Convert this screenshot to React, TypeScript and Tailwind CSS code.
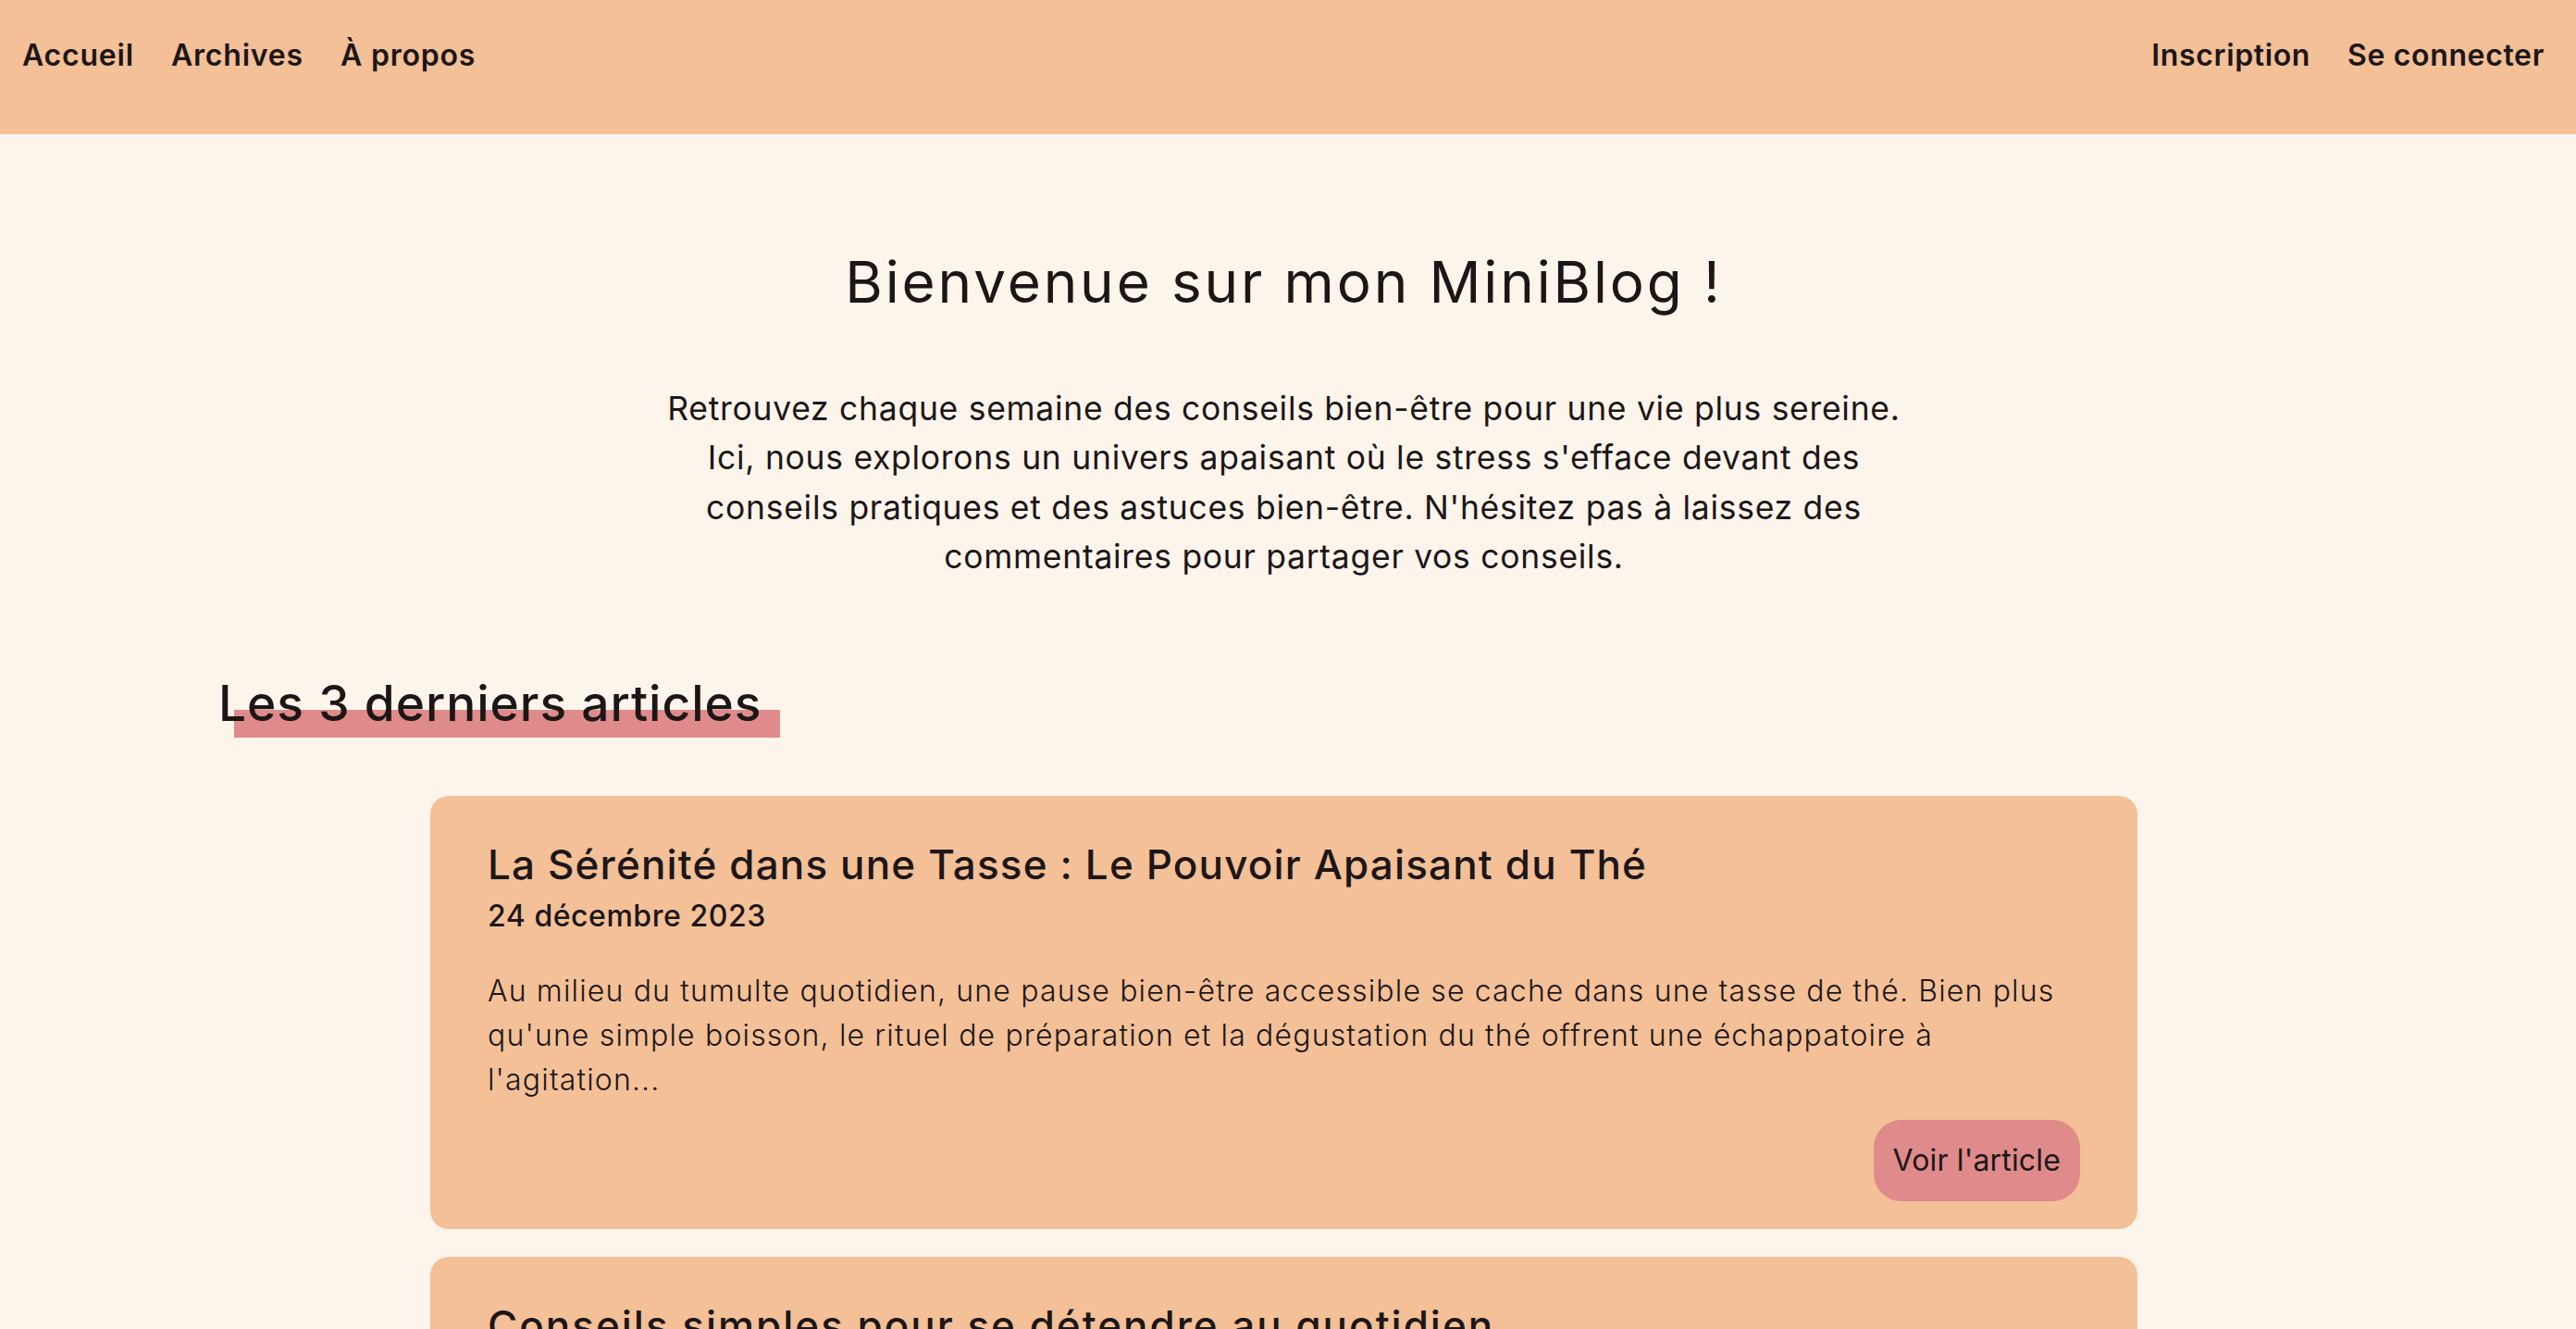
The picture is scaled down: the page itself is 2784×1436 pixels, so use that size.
import React from "react";

const articles = [
  {
    title: "La Sérénité dans une Tasse : Le Pouvoir Apaisant du Thé",
    date: "24 décembre 2023",
    lines: [
      "Au milieu du tumulte quotidien, une pause bien-être accessible se cache dans une tasse de thé. Bien plus",
      "qu'une simple boisson, le rituel de préparation et la dégustation du thé offrent une échappatoire à",
      "l'agitation...",
    ],
  },
  {
    title: "Conseils simples pour se détendre au quotidien",
    date: "17 décembre 2023",
    lines: [
      "Dans un monde où le rythme effréné de la vie quotidienne peut souvent nous submerger, il est",
      "essentiel de prendre des moments pour se détendre...",
    ],
  },
];

export default function App() {
  return (
    <div
      className="min-h-screen bg-[#fdf5ec] text-[#1d1617]"
      style={{ fontFamily: "Inter, 'Noto Sans', sans-serif" }}
    >
      <nav className="flex h-[145px] items-start justify-between bg-[#f3c097] pl-[24px] pr-[34px] pt-[36px]">
        <div className="flex gap-[40px] text-[32px] font-semibold leading-[48px] tracking-[0.025em]">
          <a>Accueil</a>
          <a>Archives</a>
          <a>À propos</a>
        </div>
        <div className="flex gap-[40px] text-[32px] font-semibold leading-[48px] tracking-[0.02em]">
          <a>Inscription</a>
          <a>Se connecter</a>
        </div>
      </nav>

      <main className="flex w-[2775px] flex-col">
        <h1 className="mt-[124px] text-center text-[62px] font-normal leading-[72px] tracking-[0.046em]">
          Bienvenue sur mon MiniBlog !
        </h1>
        <p className="mt-[74px] text-center text-[35.5px] font-normal leading-[53.3px] tracking-[0.02em]">
          Retrouvez chaque semaine des conseils bien-être pour une vie plus sereine.
          <br />
          Ici, nous explorons un univers apaisant où le stress s'efface devant des
          <br />
          conseils pratiques et des astuces bien-être. N'hésitez pas à laissez des
          <br />
          commentaires pour partager vos conseils.
        </p>

        <div className="ml-[236px] mt-[100px] self-start">
          <h2 className="relative inline-block text-[53.3px] font-medium leading-[64px] tracking-[0.018em]">
            <span className="absolute bottom-[-5px] left-[17px] right-[-20px] h-[30px] bg-[#df8a8b]" />
            <span className="relative">Les 3 derniers articles</span>
          </h2>
        </div>

        <div className="mx-auto mt-[68px] flex w-[1845px] flex-col gap-[30px]">
          {articles.map((a, idx) => (
            <article
              key={a.title}
              className="flex flex-col rounded-[20px] bg-[#f3c097] px-[62px] pb-[30px] pt-[48px]"
            >
              <h3
                className={
                  idx === 0
                    ? "text-[44px] font-medium leading-[53px] tracking-[0.026em]"
                    : "text-[44px] font-medium leading-[53px] tracking-[0.045em]"
                }
              >
                {a.title}
              </h3>
              <div className="mt-[5px] text-[32px] font-medium leading-[48px] tracking-[0.017em]">{a.date}</div>
              <p className="mt-[33px] text-[32px] font-light leading-[48px] tracking-[0.036em]">
                {a.lines.map((l, i) => (
                  <React.Fragment key={i}>
                    {l}
                    {i < a.lines.length - 1 && <br />}
                  </React.Fragment>
                ))}
              </p>
              <div className="mt-[19px] flex justify-end">
                <a className="flex h-[88px] items-center rounded-[30px] bg-[#df8a8b] px-[21px] text-[32px] font-normal leading-[48px] tracking-[0.005em]">
                  Voir l'article
                </a>
              </div>
            </article>
          ))}
        </div>
      </main>
    </div>
  );
}
